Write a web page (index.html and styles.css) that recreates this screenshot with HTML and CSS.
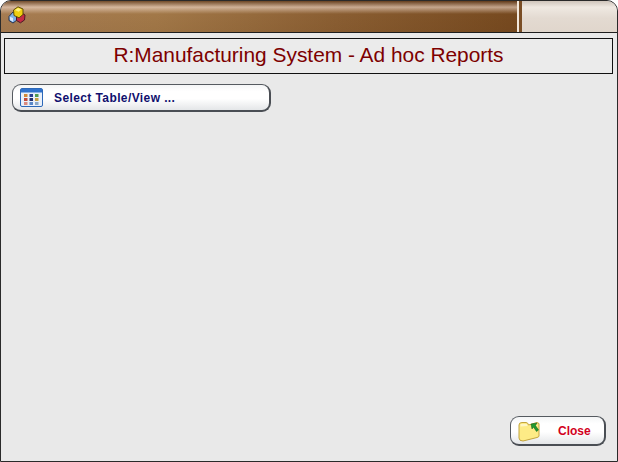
FILE: index.html
```html
<!DOCTYPE html>
<html lang="en">
<head>
<meta charset="utf-8">
<title>Ad hoc Reports</title>
<link rel="stylesheet" href="styles.css">
</head>
<body>
<div class="window">
  <div class="titlebar">
    <div class="title-left">
      <svg class="app-icon" width="18" height="18" viewBox="0 0 18 18">
        <path d="M1 10.500 L5 6 L9 8.500 L9 14 L5 17 L1 14.500Z" fill="#7fb0e6" stroke="#26324e" stroke-width="1"/>
        <path d="M1.800 10.800 L5 12 L5 15.800 L2 14Z" fill="#dbe9fa"/>
        <path d="M8.500 9.500 L13 6.500 L17 9 L16.500 14 L12.500 16.800 L8.500 14.500Z" fill="#c42c44" stroke="#4a1a26" stroke-width="1"/>
        <path d="M5.500 4 L10 .8 L15 3 L15 8.500 L11 11.800 L6 9.500Z" fill="#f0cf10" stroke="#5e4e08" stroke-width="1"/>
        <path d="M7 4 L10 2 L13.500 3.500 L10.500 5.800Z" fill="#fff27a"/>
      </svg>
    </div>
    <div class="title-divider"></div>
    <div class="title-right"></div>
  </div>
  <h1 class="heading">R:Manufacturing System - Ad hoc Reports</h1>
  <div class="toolbar">
    <button class="btn btn-select" type="button">
      <svg class="btn-icon" width="24" height="20" viewBox="0 0 24 20">
        <rect x=".5" y=".5" width="22" height="18" rx="1.500" fill="#e9f0fa" stroke="#2c68b8"/>
        <rect x="1" y="1" width="21" height="3.500" fill="#2f72cc"/>
        <rect x="4" y="6" width="3.500" height="3" fill="#d08a3a"/>
        <rect x="9.500" y="6" width="3.500" height="3" fill="#2a3f90"/>
        <rect x="15" y="6" width="3.500" height="3" fill="#4f9a50"/>
        <rect x="4" y="10" width="3.500" height="3" fill="#c24a3a"/>
        <rect x="9.500" y="10" width="3.500" height="3" fill="#22306e"/>
        <rect x="15" y="10" width="3.500" height="3" fill="#c8a040"/>
        <rect x="4" y="14" width="3.500" height="3" fill="#d88a80"/>
        <rect x="9.500" y="14" width="3.500" height="3" fill="#5a88c8"/>
        <rect x="15" y="14" width="3.500" height="3" fill="#8aa8c8"/>
      </svg>
      <span class="btn-label label-select">Select Table/View ...</span>
    </button>
  </div>
  <div class="footer">
    <button class="btn btn-close" type="button">
      <svg class="btn-icon" width="24" height="22" viewBox="0 0 24 22">
        <path d="M1 5 Q1 2.500 4 2.500 L8 2.500 Q10 2.500 10.500 5 L19 2.500 L21 3.500 L21 16 Q21 17 19 17.500 L5 21 Q1 21 1 18Z" fill="#fdeb86" stroke="#c4a53c"/>
        <path d="M2.500 4 L9 4 L9.500 6 L2.500 6.500Z" fill="#fff6c4"/>
        <path d="M13 4 L19 3 L17.500 5.500 L20.500 10 L18.500 11.500 L15.500 7 L14 9Z" fill="#1f9a30" stroke="#0e5a1a" stroke-width=".5"/>
      </svg>
      <span class="btn-label label-close">Close</span>
    </button>
  </div>
</div>
</body>
</html>
```

FILE: styles.css
```css
* {
  box-sizing: border-box;
}

html,
body {
  margin: 0;
  padding: 0;
  background: #ffffff;
}

.window {
  width: 618px;
  height: 462px;
  display: flex;
  flex-direction: column;
  background: #e9e9e9;
  border: 1px solid #2a2a2a;
  border-radius: 11px 11px 0 0;
  overflow: hidden;
}

.titlebar {
  height: 32px;
  flex: none;
  display: flex;
  border-bottom: 1px solid #1e1e1e;
}

.title-left {
  width: 516px;
  padding: 5px 0 0 7px;
  background:
    linear-gradient(180deg, rgba(80, 45, 20, 0.6) 0, rgba(255, 235, 225, 0.55) 20%, rgba(255, 240, 220, 0) 42%, rgba(60, 30, 0, 0.05) 100%),
    linear-gradient(90deg, #a67c52 0, #a27848 30%, #8a5e32 65%, #76491f 100%);
}

.app-icon {
  display: block;
}

.title-divider {
  width: 5px;
  background: linear-gradient(90deg, #f3e8dc 0, #f3e8dc 40%, #7a4e26 40%, #7a4e26 100%);
}

.title-right {
  flex: 1;
  background: linear-gradient(180deg, #cfc5bb 0, #efe9e2 20%, #e3dad1 55%, #e0d6cc 100%);
}

.heading {
  height: 36px;
  margin: 5px 4px 0 3px;
  border: 1px solid #111111;
  background: #ebebeb;
  color: #7d0000;
  font-family: "Liberation Sans", Arial, sans-serif;
  font-size: 20.9px;
  font-weight: 400;
  line-height: 32px;
  text-align: center;
}

.toolbar {
  margin: 10px 0 0 11px;
}

.btn {
  display: flex;
  align-items: center;
  padding: 0;
  border: 1px solid #555a60;
  border-right: 2px solid #4a4e54;
  border-bottom: 2px solid #4a4e54;
  background: linear-gradient(180deg, #f4f5f6 0, #ffffff 25%, #ffffff 55%, #e4e6e8 100%);
  font-family: "Liberation Sans", Arial, sans-serif;
  font-size: 12px;
  font-weight: 700;
}

.btn-select {
  width: 259px;
  height: 28px;
  border-radius: 9px;
  padding-left: 7px;
}

.btn-close {
  width: 96px;
  height: 30px;
  border-radius: 9px;
  padding-left: 7px;
}

.btn-label {
  display: block;
}

.label-select {
  margin-left: 10px;
  color: #10106e;
  letter-spacing: 0.4px;
}

.label-close {
  margin-left: 16px;
  color: #d2001c;
}

.footer {
  margin-top: auto;
  margin-bottom: 15px;
  margin-left: 509px;
}
```
